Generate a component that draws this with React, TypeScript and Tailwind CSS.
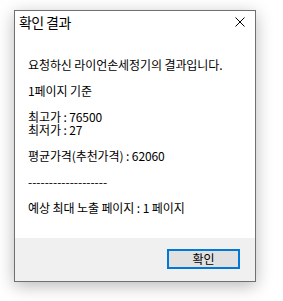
export default function App() {
  const font = { fontFamily: '"Noto Sans CJK KR", "Noto Sans", sans-serif' };
  return (
    <div className="w-[283px] h-[301px] bg-white pl-[14px] pt-[10px]" style={font}>
      <div className="w-[242px] h-[272px] border border-[#707070] bg-white flex flex-col shadow-[0_4px_16px_rgba(0,0,0,0.28)]">
        <div className="h-[22px] flex items-center justify-between pl-[4px] pr-[10px] text-[14px] text-black">
          <span className="leading-[22px] tracking-[-0.6px]">확인 결과</span>
          <svg width="10" height="10" viewBox="0 0 10 10" className="block">
            <path d="M0.5 0.5 L9.5 9.5 M9.5 0.5 L0.5 9.5" stroke="#000" strokeWidth="1" />
          </svg>
        </div>
        <div className="flex-1 pl-[13px] pt-[25px] text-[12px] leading-[13px] text-black tracking-[-0.1px]">
          <div>요청하신 라이언손세정기의 결과입니다.</div>
          <div className="h-[13px]" />
          <div>1페이지 기준</div>
          <div className="h-[13px]" />
          <div>최고가 : 76500</div>
          <div>최저가 : 27</div>
          <div className="h-[13px]" />
          <div>평균가격(추천가격) : 62060</div>
          <div className="h-[13px]" />
          <div className="tracking-normal">-------------------</div>
          <div className="h-[13px]" />
          <div>예상 최대 노출 페이지 : 1 페이지</div>
        </div>
        <div className="h-[43px] bg-[#f0f0f0] flex items-start justify-end pt-[11px] pr-[15px]">
          <button className="w-[73px] h-[20px] border-2 border-[#0078d7] bg-[#e1e1e1] text-[12px] leading-[16px] text-black">
            확인
          </button>
        </div>
      </div>
    </div>
  );
}
